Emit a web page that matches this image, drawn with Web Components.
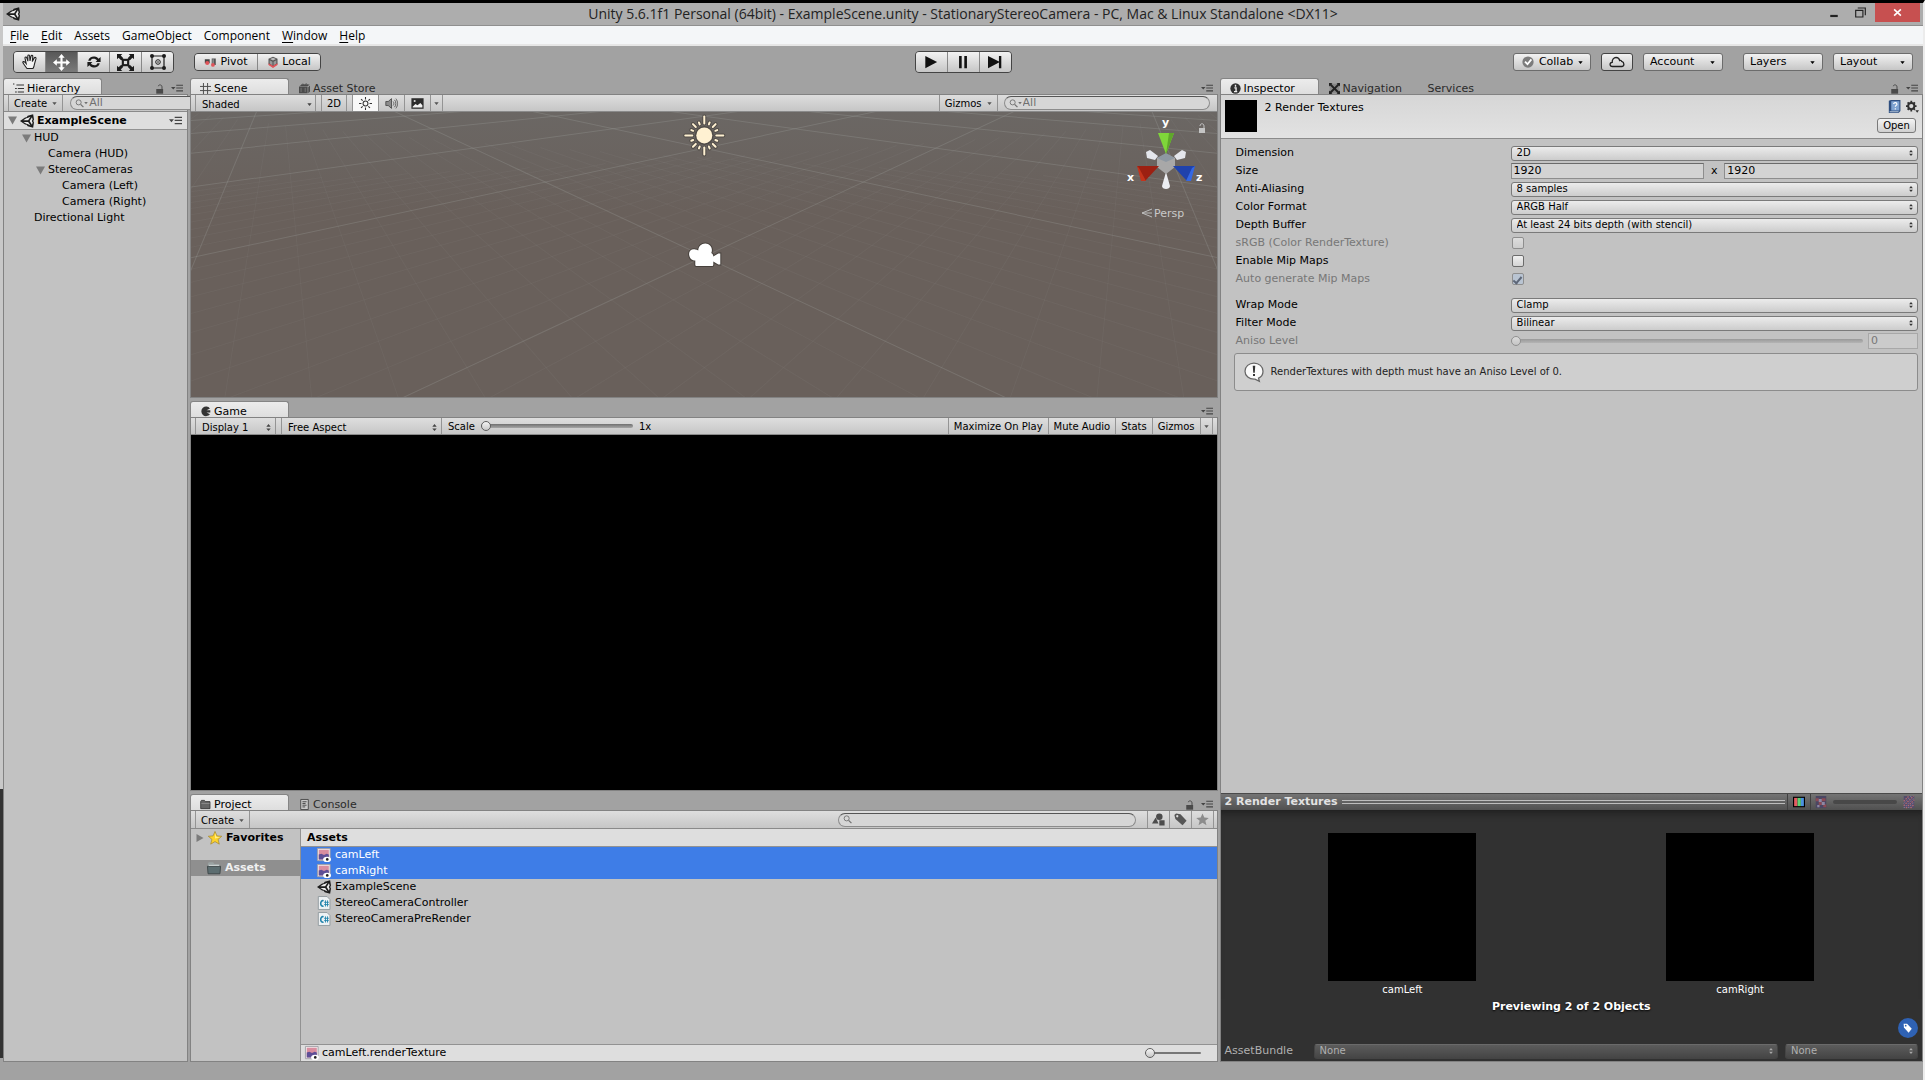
<!DOCTYPE html>
<html lang="en">
<head>
<meta charset="utf-8">
<title>Unity 5.6.1f1 Personal (64bit) - ExampleScene.unity</title>
<style>
    html, body {
        margin: 0;
        height: 100%;
    }

    body {
        box-sizing: border-box;
        display: flex;
        border-top: 3px solid #000;
        border-right: 2px solid #ececec;
        background-color: #a2a2a2;
        color: #000;
        font: 11px/16px "DejaVu Sans", sans-serif;
        overflow: hidden;
    }
</style>
</head>
<body>
<editor-window></editor-window>

<script>
const ICONS = {
    unity: `<path d="M15 .2 8.800 2 7.600 3.800 5.800 3.900 0 8l5.800 4.100 1.800.1L8.800 14 15 15.800 16 9.600 15.200 8 16 6.400z" fill="#1c1c1c"/><path d="M3.800 7 7.200 4.800 8.600 4.700 12 3 9.300 7zM3.800 9l3.400 2.200 1.400.1L12 13 9.300 9zM11 8l2.700-4.300.7 2.600-.9 1.700.9 1.700-.7 2.600z" fill="#ececec"/>`,
    hand: `<path d="M5 14.500 C3.500 12.500 1.500 10 .8 8.600 .6 7.500 2 7.200 2.900 8.200L4.200 9.600 3 4.200C2.800 2.900 4.400 2.600 4.800 3.800L5.900 7.200 5.800 2C5.900.7 7.400.7 7.600 2L8 7 9 2.200C9.300 1 10.900 1.200 10.800 2.500L10.300 7.500 12.300 3.900C13 2.900 14.300 3.500 14 4.700L12.600 9.500C12.300 11.500 12 13 11 14.500z" fill="#f2f2f2" stroke="#222" stroke-width="1.100"/>`,
    move: `<path d="M8 0l3 3.600H9V7h3.400V5L16 8l-3.600 3V9H9v3.400h2L8 16l-3-3.600h2V9H3.600v2L0 8l3.600-3v2H7V3.600H5z" fill="#fff"/>`,
    rotate: `<path d="M2.200 6.800C3 3.500 6 2.300 8.500 2.600c2 .2 3.300 1.200 4.100 2.200L14.600 3v5H9.600l1.500-1.600C9.500 4.200 5 4.200 4.700 6.800zM13.800 9.200c-.8 3.300-3.800 4.500-6.300 4.200-2-.2-3.300-1.200-4.100-2.200L1.400 13V8h5L4.900 9.600c1.600 2.200 6.100 2.200 6.400-.4z" fill="#1c1c1c"/>`,
    scale: `<path d="M0 0h5L3.500 1.500 6 4 4 6 1.500 3.500 0 5zM16 0h-5l1.500 1.500L10 4l2 2 2.500-2.500L16 5zM0 16h5l-1.500-1.500L6 12l-2-2-2.500 2.500L0 11zM16 16h-5l1.500-1.500L10 12l2-2 2.500 2.500L16 11z" fill="#1c1c1c"/><rect x="5.500" y="5.500" width="5" height="5" fill="#ddd" stroke="#1c1c1c" stroke-width="2"/>`,
    rect: `<path d="M2 2h12v12H2z" fill="none" stroke="#1c1c1c" stroke-width="1.200"/><g fill="#1c1c1c"><circle cx="2" cy="2" r="2"/><circle cx="14" cy="2" r="2"/><circle cx="2" cy="14" r="2"/><circle cx="14" cy="14" r="2"/></g><circle cx="8" cy="8" r="2.300" fill="none" stroke="#1c1c1c"/><circle cx="8" cy="8" r=".8" fill="#1c1c1c"/>`,
    pivot: `<path d="M1 4h6v5H1z" fill="#444"/><circle cx="4" cy="8.500" r="2.500" fill="#e0545a"/><path d="M9.500 3h5v8h-5z" fill="#555"/><path d="M10.500 4h1.500v6h-1.500z" fill="#999"/><circle cx="11" cy="11" r="2.300" fill="#e0545a"/>`,
    local: `<path d="M8 1l6 2.600v7.400L8 15l-6-4V3.600z" fill="#555"/><path d="M8 2.300l4 1.700-4 2-4-2z" fill="#bbb"/><path d="M3.500 5.500 7.300 7.500v5L3.500 10zM12.500 5.500 8.700 7.500v5l3.800-2.500z" fill="#999"/><path d="M2 9.500 8 13l6-3.500V12l-6 4-6-4z" fill="#e0545a"/>`,
    play: `<path d="M1.500 1 15 8 1.500 15z" fill="#111"/>`,
    pause: `<path d="M3.500 1h3v14h-3zM9.500 1h3v14h-3z" fill="#111"/>`,
    step: `<path d="M0 1 12.500 7.500V1h2.700v14h-2.700V8.500L0 15z" fill="#111"/>`,
    check: `<circle cx="8" cy="8" r="7.500" fill="#7c7c7c"/><path d="M4 7.600 7.300 11 12.500 4.500" fill="none" stroke="#fff" stroke-width="2.400"/>`,
    cloud: `<path d="M3.500 12.500C.3 12.300.3 8.600 3.200 8.300 3 5.500 4.800 3.500 7 3.500c2 0 3.300 1.200 3.700 3 .9-.5 1.700.2 2 .9 2.900.9 2.900 4.700 0 5.100z" fill="none" stroke="#222" stroke-width="1.300"/>`,
    down: `<path d="M1 4h14L8 13z" fill="currentColor"/>`,
    updown: `<path d="M8 0l5 6H3zM8 16l5-6H3z" fill="currentColor"/>`,
    foldopen: `<path d="M0 1h16L8 15z" fill="#7b7b7b"/>`,
    foldclosed: `<path d="M1 0v16L15 8z" fill="#7b7b7b"/>`,
    hierarchy: `<path d="M0 1.500h2M5 3h11M3 8h2.500M7 8h9M3 13h2.500M7 13h9" stroke="#333" stroke-width="1.500"/>`,
    grid: `<path d="M5 0v16M11 0v16M0 5h16M0 11h16" stroke="#4c4c4c" stroke-width="1.400"/>`,
    store: `<path d="M0 5 12.500 5V15H0zM13.500 6 16 3.500V12.500L13.500 15zM1 4.200 4 2h11.500L13 4.200z" fill="#4b4b4b"/><path d="M4 4C4 .5 7 .5 7.500 4M8.500 4C8.500.5 12 .5 12 3" fill="none" stroke="#4b4b4b" stroke-width="1.300"/><path d="M3 7v6M9 7v6" stroke="#8b8b8b"/>`,
    game: `<path d="M14.500 3.500A7 7 0 1 0 14.500 12L9.500 9.600H15V6H9.500z" fill="#333"/>`,
    folder: `<path d="M1 14V3.500L2 2h4.500L8 3.800H14.500V14z" fill="#666" stroke="#333" stroke-width="1.200"/><path d="M2 6.500h12" stroke="#999"/>`,
    bigfolder: `<path d="M1 14V3L2 1.500h5L8.500 3.300H14V6H1z" fill="#9aa2a2"/><path d="M.5 6h15l-.7 8.600H1.200z" fill="#5c6d70" stroke="#3a4446"/><path d="M2 5h12" stroke="#dfe5e5"/>`,
    console: `<path d="M2.500.7h11v14.600h-11z" fill="#c9c9c9" stroke="#444" stroke-width="1.300"/><path d="M5 4h6M5 6.500h4.500M5 9h6M5 11.500h4" stroke="#333" stroke-width="1.200"/>`,
    info: `<circle cx="8" cy="8" r="7.500" fill="#303030"/><path d="M8 2.500v3M6.300 7h2.500v5M5.800 12.500h4.700" stroke="#f0f0f0" stroke-width="2" fill="none"/>`,
    nav: `<path d="M1 1h14v14H1z" fill="#888"/><path d="M0 0h5L3.500 1.500 8 6l4.500-4.500L11 0h5v5l-1.500-1.500L10 8l4.500 4.500L16 11v5h-5l1.500-1.500L8 10l-4.500 4.500L5 16H0v-5l1.500 1.500L6 8 1.500 3.500 0 5z" fill="#222"/>`,
    lock: `<path d="M2 8h11v7.500H2z" fill="currentColor"/><path d="M11.200 8V4.500C11.200.6 5.500.6 5.300 3.500" fill="none" stroke="currentColor" stroke-width="1.600"/>`,
    panemenu: `<path d="M0 6.500h6L3 10zM7 3.500h9V5H7zM7 7.200h9v1.500H7zM7 11h9v1.500H7z" fill="#444"/>`,
    search: `<circle cx="6.500" cy="6" r="4.500" fill="none" stroke="#707070" stroke-width="1.600"/><path d="M10 9.500l5 5" stroke="#707070" stroke-width="2.200"/>`,
    light: `<circle cx="8" cy="8" r="3" fill="none" stroke="#333" stroke-width="1.300"/><path d="M8 0v3M8 13v3M0 8h3M13 8h3M2.500 2.500l2 2M11.500 11.500l2 2M13.500 2.500l-2 2M4.500 11.500l-2 2" stroke="#333" stroke-width="1.300"/>`,
    audio: `<path d="M1 5.500h3L8 2v12l-4-3.500H1z" fill="#8c8c8c" stroke="#444"/><path d="M10 5.500c1.200 1.500 1.200 3.500 0 5M11.700 3.500c2.200 2.600 2.200 6.400 0 9M13.400 2c2.700 3.500 2.700 8.500 0 12" fill="none" stroke="#555" stroke-width="1.100"/>`,
    image: `<path d="M.5 1.500h15v13H.5z" fill="#2c2c2c"/><path d="M2 12 5.500 8.500 8 10 11.500 7.500 14 10v3H2z" fill="#f2f2f2"/><circle cx="4.500" cy="5" r="1.300" fill="#ddd"/>`,
    shapes: `<circle cx="9" cy="4.500" r="4" fill="#4c4c4c"/><path d="M0 13 4.500 5.500 8 13zM9 9h6.500v6.500H9z" fill="#4c4c4c"/>`,
    tag: `<path d="M.5 2.500 2.500.5 8 1.500 15.500 9.500 10.500 15 1.700 7.500z" fill="currentColor"/><circle cx="4" cy="4" r="1.400" fill="#ddd"/>`,
    bluetag: `<path d="M1 1h5.500L14 9l-5 6.500L1.500 7z" fill="#fff"/><circle cx="4.300" cy="4.300" r="1.400" fill="#2f62b4"/>`,
    star: `<path d="M8 .5l2.200 5.100 5.500.4-4.200 3.600 1.400 5.400L8 12.100 3.100 15l1.400-5.400L.3 6l5.500-.4z" fill="#8c8c8c"/>`,
    favorite: `<path d="M8 .5l2.200 5.100 5.500.4-4.200 3.600 1.400 5.400L8 12.100 3.100 15l1.400-5.400L.3 6l5.500-.4z" fill="#fcd22c" stroke="#a3852c" stroke-width=".8"/><path d="M8 2.500 9.500 6.500 14 7 8 8.500z" fill="#fff08c"/>`,
    texture: `<path d="M.5.500h14.500v14H.5z" fill="#f2ecec" stroke="#9c9ca4"/><path d="M2 2h11.500v11H2z" fill="#d98ea0"/><path d="M2 7.500 5 6.500 8 8l3-1.500 2.500.8V13H2z" fill="#5e4f96"/><ellipse cx="11.500" cy="13" rx="4.500" ry="2.900" fill="#fff"/><circle cx="11.700" cy="13" r="1.500" fill="#222"/>`,
    script: `<path d="M1.500.6h10L14.800 4v11.400H1.500z" fill="#eef2f4" stroke="#8d979c"/><path d="M7.500 5.500C3.500 4 2.800 12.500 7.500 11.700" fill="none" stroke="#1f83ab" stroke-width="1.800"/><path d="M9.700 5v7M12 5v7M8.200 7.200h5.300M8.200 9.800h5.300" stroke="#1f83ab" stroke-width="1"/>`,
    book: `<path d="M1 1 3.500 0h11.800v13.500L13 16H1z" fill="#2f4f80"/><path d="M4 1.500h10v11.500H4z" fill="#7fa3d1"/><path d="M7 5c0-2.500 4-2.300 4 .1 0 1.600-2 1.500-2 3.200M9 10v1.700" stroke="#fff" stroke-width="1.400" fill="none"/><path d="M2 14.500h11" stroke="#dde6f2"/>`,
    gear: `<circle cx="6.500" cy="7.500" r="3.800" fill="none" stroke="#303030" stroke-width="2.400"/><path d="M6.500 1v2.500M6.500 11.500V14M0 7.500h2.500M10.500 7.500H13M2 3l1.800 1.800M9.200 10.200 11 12M11 3 9.200 4.800M3.800 10.200 2 12" stroke="#303030" stroke-width="2.200"/><path d="M11.500 12.500H16l-2.200 3.200z" fill="#303030"/>`,
    help: `<path d="M8 .8C12 .8 15.200 3.700 15.200 7.300c0 3-1.800 4.800-3.600 5.600L12.300 15.500 8.800 13.700C4 14 .8 11 .8 7.300.8 3.700 4 .8 8 .8z" fill="#fafafa" stroke="#666"/><path d="M7 3h2l-.4 5.500H7.400zM7.200 9.500h1.600v1.700H7.200z" fill="#333"/>`,
    rgb: `<path d="M0 1h16v14H0z" fill="#000"/><path d="M1.500 2.500H6v11H1.500z" fill="#e35b62"/><path d="M6 2.500h4.500v11H6z" fill="#5fd072"/><path d="M10.500 2.500h4v11h-4z" fill="#4c91e0"/>`,
    mipsmall: `<path d="M1 0h14v16H1z" fill="#4b4763"/><path d="M1 3h4v4H1zM9 3h5v4H9zM5 8h4v4H5zM11 11h4v4h-4z" fill="#8c4a54"/><path d="M5 4h4v4H5zM9 8h4v4H9zM3 12h3v3H3z" fill="#8e88a4"/>`,
    miplarge: `<path d="M1 0h14v16H1z" fill="#544c6c"/><path d="M1 7 8 0M1 13 14 0M4 16 15 5M10 16l5-5" stroke="#b06a70" stroke-width="1.800" stroke-dasharray="2 1.500"/><path d="M1 10 11 0M1 16 15 2M7 16l8-8" stroke="#8e88a8" stroke-width="1.200" stroke-dasharray="2 2"/>`,
    minimize: `<path d="M2 11h12v3.500H2z" fill="#222"/>`,
    restore: `<path d="M1 5h10.500v9.500H1zM4 1.500h11V12" fill="none" stroke="#222" stroke-width="1.700"/>`,
    close: `<path d="M2 2.500l12 11M14 2.500l-12 11" stroke="#fff" stroke-width="2.800"/>`
};

// small helper, every element below uses it
function define(name, markup, init) {
    customElements.define(name, class extends HTMLElement {
        connectedCallback() {
            if (this.shadowRoot) {
                return;
            }
            const root = this.attachShadow({mode: "open"});
            root.innerHTML = typeof markup === "function" ? markup(this) : markup;
            if (init) {
                init(this, root);
            }
        }
    });
}

define("ui-icon", el => {
    const w = el.getAttribute("size") || 12;
    return `
    <style>
        :host { display: inline-flex; flex: none; }
        svg { display: block; overflow: visible; }
    </style>
    <svg width="${w}" height="${w}" viewBox="0 0 16 16" aria-hidden="true">${ICONS[el.getAttribute("name")]}</svg>`;
});

/* ---------- frame ---------- */

define("title-bar", `
    <style>
        :host {
            display: grid;
            grid-template-columns: 1fr auto 1fr;
            align-items: center;
            height: 22px;
            background-color: #adadad;
            border-bottom: 1px solid #8f8f8f;
            font: 14px/20px "Open Sans", "Noto Sans", sans-serif;
            color: #222;
        }
        .logo { padding-left: 3px; }
        .buttons { display: flex; justify-content: flex-end; align-self: start; padding-right: 3px; }
        button {
            display: flex;
            align-items: center;
            justify-content: center;
            width: 26px;
            height: 19px;
            padding: 0;
            border: 0;
            background: none;
        }
        .close { width: 45px; margin-left: 2px; background-color: #c75050; }
    </style>
    <ui-icon class="logo" name="unity" size="14"></ui-icon>
    <span><slot></slot></span>
    <div class="buttons">
        <button aria-label="Minimize"><ui-icon name="minimize" size="10"></ui-icon></button>
        <button aria-label="Restore"><ui-icon name="restore" size="11"></ui-icon></button>
        <button class="close" aria-label="Close"><ui-icon name="close" size="9"></ui-icon></button>
    </div>`);

define("menu-bar", `
    <style>
        :host {
            display: flex;
            gap: 12px;
            height: 18px;
            padding-left: 7px;
            background-color: #f4f6f8;
            border-bottom: 2px solid #e6e6e6;
            font: 12px/19px "Open Sans", "Noto Sans", sans-serif;
        }
        a { color: #000; text-decoration: none; }
        u { text-underline-offset: 2px; }
    </style>
    <a href="#"><u>F</u>ile</a>
    <a href="#"><u>E</u>dit</a>
    <a href="#">Assets</a>
    <a href="#">GameObject</a>
    <a href="#">Component</a>
    <a href="#"><u>W</u>indow</a>
    <a href="#"><u>H</u>elp</a>`);

define("main-toolbar", `
    <style>
        :host {
            display: grid;
            grid-template-columns: 1fr auto 1fr;
            align-items: center;
            height: 32px;
            padding: 0 10px;
            box-sizing: border-box;
        }
        div { display: flex; align-items: center; }
        .group {
            border: 1px solid #444;
            border-radius: 4px;
            background-color: #888;
            gap: 1px;
            overflow: hidden;
        }
        button {
            display: flex;
            align-items: center;
            justify-content: center;
            box-sizing: border-box;
            height: 20px;
            padding: 0;
            border: 0;
            background: linear-gradient(#f2f2f2, #c6c6c6);
            color: #000;
            font: inherit;
        }
        .tools { margin-right: 20px; }
        .tools button, .play button { width: 31px; }
        .tools .on { background: linear-gradient(#585858, #7a7a7a); }
        .pivot button { height: 16px; width: 62px; gap: 3px; }
        .right { justify-content: flex-end; gap: 10px; }
        .right button {
            height: 18px;
            padding: 0 7px 0 6px;
            border: 1px solid #6c6c6c;
            border-radius: 3px;
            justify-content: space-between;
            width: 80px;
        }
        .right .collab { width: 78px; padding: 0 7px 0 8px; }
        .right .cloud { width: 32px; justify-content: center; padding: 0; border-color: #444; }
        .layers { margin-left: 10px; }
    </style>
    <div>
        <div class="group tools">
            <button aria-label="Hand"><ui-icon name="hand" size="16"></ui-icon></button>
            <button class="on" aria-label="Move"><ui-icon name="move" size="17"></ui-icon></button>
            <button aria-label="Rotate"><ui-icon name="rotate" size="16"></ui-icon></button>
            <button aria-label="Scale"><ui-icon name="scale" size="17"></ui-icon></button>
            <button aria-label="Rect"><ui-icon name="rect" size="16"></ui-icon></button>
        </div>
        <div class="group pivot">
            <button><ui-icon name="pivot" size="13"></ui-icon>Pivot</button>
            <button><ui-icon name="local" size="12"></ui-icon>Local</button>
        </div>
    </div>
    <div class="group play">
        <button aria-label="Play"><ui-icon name="play" size="14"></ui-icon></button>
        <button aria-label="Pause"><ui-icon name="pause" size="14"></ui-icon></button>
        <button aria-label="Step"><ui-icon name="step" size="14"></ui-icon></button>
    </div>
    <div class="right">
        <button class="collab"><ui-icon name="check" size="12"></ui-icon>Collab<ui-icon name="down" size="5"></ui-icon></button>
        <button class="cloud" aria-label="Services"><ui-icon name="cloud" size="16"></ui-icon></button>
        <button>Account<ui-icon name="down" size="5"></ui-icon></button>
        <button class="layers">Layers<ui-icon name="down" size="5"></ui-icon></button>
        <button>Layout<ui-icon name="down" size="5"></ui-icon></button>
    </div>`);

/* ---------- docking ---------- */

define("dock-tab", el => `
    <style>
        :host { display: flex; }
        button {
            display: flex;
            align-items: center;
            gap: 3px;
            box-sizing: border-box;
            min-width: 99px;
            height: 16px;
            padding: 3px 9px 0 9px;
            border: 1px solid transparent;
            border-bottom: 0;
            border-radius: 3px 3px 0 0;
            background: none;
            color: #2a2a2a;
            font: inherit;
            line-height: 13px;
        }
        :host([active]) button {
            background: linear-gradient(#ececec, #dedede);
            border-color: #858585;
            color: #000;
        }
    </style>
    <button>${el.hasAttribute("icon") ? `<ui-icon name="${el.getAttribute("icon")}" size="11"></ui-icon>` : ""}<slot></slot></button>`);

define("dock-panel", el => `
    <style>
        :host {
            display: flex;
            flex-direction: column;
            min-width: 0;
            min-height: 0;
        }
        .tabs {
            display: flex;
            height: 16px;
            border-bottom: 1px solid #828282;
        }
        .actions {
            display: flex;
            align-items: flex-end;
            gap: 6px;
            margin-left: auto;
            padding-right: 5px;
            color: #4a4a4a;
        }
        .body {
            flex: 1;
            display: flex;
            flex-direction: column;
            min-height: 0;
            border: 1px solid #828282;
            border-top: 0;
            background-color: #c2c2c2;
        }
    </style>
    <div class="tabs">
        <slot name="tab"></slot>
        <div class="actions">
            ${el.hasAttribute("lockable") ? `<ui-icon name="lock" size="10"></ui-icon>` : ""}
            <ui-icon name="panemenu" size="12"></ui-icon>
        </div>
    </div>
    <div class="body"><slot></slot></div>`);

define("tool-strip", `
    <style>
        :host {
            display: flex;
            height: 16px;
            padding: 0 4px;
            border-bottom: 1px solid #8a8a8a;
            background: linear-gradient(#dedede, #c6c6c6);
            font-size: 10px;
            line-height: 17px;
        }
    </style>
    <slot></slot>`);

define("strip-button", el => `
    <style>
        :host { display: flex; margin-right: -1px; }
        button {
            display: flex;
            align-items: center;
            justify-content: center;
            gap: 5px;
            padding: 1px 5px 0;
            border: 1px solid #949494;
            border-width: 0 1px;
            background: none;
            color: #000;
            font: inherit;
        }
        :host([icon]) button { padding: 0 6px; }
        :host([narrow]) button { padding: 0 4px; }
        :host([mini]) button { padding: 0 3px; }
        :host([on]) button { background-color: #f8f8f8; }
        :host([plain]) button { border-color: transparent; }
        ui-icon { color: #555; }
    </style>
    <button aria-label="${el.getAttribute("label") || el.textContent}">
        ${el.hasAttribute("icon") ? `<ui-icon name="${el.getAttribute("icon")}" size="13"></ui-icon>` : ""}
        <slot></slot>
        ${el.hasAttribute("menu") ? `<ui-icon name="down" size="5"></ui-icon>` : ""}
    </button>`);

// single arrow button at the end of a strip group
define("strip-arrow", el => `
    <style>
        :host { display: flex; }
        button {
            display: flex;
            align-items: center;
            padding: 0 3px;
            border: 1px solid #949494;
            border-width: 0 1px;
            background: none;
            color: #555;
        }
    </style>
    <button aria-label="${el.getAttribute("label")}"><ui-icon name="down" size="5"></ui-icon></button>`);

// flat drop-down that sits in a tool strip
define("strip-select", el => `
    <style>
        :host { display: grid; border: 1px solid #949494; border-width: 0 1px; }
        select, ui-icon { grid-area: 1 / 1; }
        select {
            appearance: none;
            padding: 1px 16px 0 6px;
            border: 0;
            border-radius: 0;
            background: none;
            color: #000;
            font: inherit;
            outline: 0;
        }
        ui-icon { place-self: center end; padding-right: 3px; color: #444; pointer-events: none; }
    </style>
    <select aria-label="${el.getAttribute("label")}"><option>${el.getAttribute("value")}</option></select>
    <ui-icon name="${el.getAttribute("arrow") || "updown"}" size="${el.hasAttribute("arrow") ? 5 : 7}"></ui-icon>`);

define("search-field", el => `
    <style>
        :host { display: flex; align-self: center; }
        label {
            flex: 1;
            display: flex;
            align-items: center;
            height: 12px;
            padding: 0 6px 0 4px;
            border: 1px solid #8c8c8c;
            border-top-color: #555;
            border-radius: 7px;
            background-color: #d6d6d6;
            color: #707070;
        }
        input {
            flex: 1;
            min-width: 0;
            padding: 0 1px;
            border: 0;
            background: none;
            color: inherit;
            font: inherit;
            line-height: 12px;
            outline: 0;
        }
        input::placeholder { color: #707070; }
    </style>
    <label>
        <ui-icon name="search" size="9"></ui-icon>
        ${el.hasAttribute("menu") ? `<ui-icon name="down" size="4"></ui-icon>` : ""}
        <input type="text" aria-label="Search" placeholder="${el.getAttribute("placeholder") || ""}">
    </label>`);

define("range-slider", el => `
    <style>
        :host { display: flex; align-items: center; }
        input {
            appearance: none;
            width: 100%;
            height: 10px;
            margin: 0;
            background: none;
        }
        input::-webkit-slider-runnable-track {
            height: 4px;
            border-radius: 2px;
            background: linear-gradient(#707070, #a6a6a6);
        }
        input::-webkit-slider-thumb {
            appearance: none;
            box-sizing: border-box;
            width: 10px;
            height: 10px;
            margin-top: -3px;
            border: 1px solid #606060;
            border-radius: 5px;
            background: linear-gradient(#f4f4f4, #c8c8c8);
        }
        :host([thin]) input::-webkit-slider-runnable-track { height: 2px; background: #777; }
        :host([thin]) input::-webkit-slider-thumb { margin-top: -4px; }
        :host([disabled]) { opacity: .5; }
        :host([dark]) input::-webkit-slider-runnable-track { background: #484848; }
        :host([dark]) input::-webkit-slider-thumb { visibility: hidden; }
    </style>
    <input type="range" min="0" max="16" value="0" aria-label="${el.getAttribute("label")}"${el.hasAttribute("disabled") ? " disabled" : ""}>`);

/* ---------- hierarchy ---------- */

define("tree-row", el => `
    <style>
        :host {
            display: flex;
            align-items: center;
            gap: 3px;
            height: 16px;
            padding-left: calc(4px + 14px * var(--depth, 0));
        }
        :host([scene]) {
            height: 17px;
            padding-right: 5px;
            border-bottom: 1px solid #929292;
            background-color: #dedede;
            font-weight: bold;
        }
        .fold { width: 9px; display: flex; }
        .menu { margin-left: auto; }
    </style>
    <span class="fold">${el.hasAttribute("open") ? `<ui-icon name="foldopen" size="9"></ui-icon>` : ""}</span>
    ${el.hasAttribute("scene") ? `<ui-icon name="unity" size="14"></ui-icon>` : ""}
    <slot></slot>
    ${el.hasAttribute("scene") ? `<ui-icon class="menu" name="panemenu" size="13"></ui-icon>` : ""}`,
    el => el.style.setProperty("--depth", el.getAttribute("depth") || 0));

define("hierarchy-panel", `
    <style>
        :host { display: flex; }
        dock-panel { flex: 1; }
        search-field { flex: 1; margin: 0 8px; font-size: 11px; }
    </style>
    <dock-panel lockable>
        <dock-tab slot="tab" icon="hierarchy" active>Hierarchy</dock-tab>
        <tool-strip>
            <strip-button menu>Create</strip-button>
            <search-field menu placeholder="All"></search-field>
        </tool-strip>
        <tree-row scene open>ExampleScene</tree-row>
        <tree-row depth="1" open>HUD</tree-row>
        <tree-row depth="2">Camera (HUD)</tree-row>
        <tree-row depth="2" open>StereoCameras</tree-row>
        <tree-row depth="3">Camera (Left)</tree-row>
        <tree-row depth="3">Camera (Right)</tree-row>
        <tree-row depth="1">Directional Light</tree-row>
    </dock-panel>`);

/* ---------- scene and game ---------- */

// ground grid seen in perspective: both line families run to the horizon
function gridLines() {
    const cx = 513, horizon = -54, spread = 425;
    let lines = "";
    for (let m = -28; m <= 60; m++) {
        const k = 0.005025 + 0.0006 * m;
        const major = m % 10 === 0;
        const top = major ? 0 : Math.max(0, 30 + m * 2);
        if (top > 130) {
            continue;
        }
        for (const side of [-1, 1]) {
            const x1 = cx + side * spread * (1 - k * (top - horizon));
            const x2 = cx + side * spread * (1 - k * (300 - horizon));
            lines += `<path d="M${x1.toFixed(1)} ${top}L${x2.toFixed(1)} 300" stroke-opacity="${major ? .25 : .08}"/>`;
        }
    }
    return lines;
}

define("scene-view", () => {
    let rays = "";
    for (let i = 0; i < 16; i++) {
        const len = i % 4 === 0 ? 19 : i % 2 === 0 ? 16 : 14;
        rays += `<path d="M0 -12V${-len}" transform="rotate(${i * 22.5})"/>`;
    }
    return `
    <style>
        :host {
            flex: 1;
            display: grid;
            min-height: 0;
            overflow: hidden;
            background: linear-gradient(#6b6764, #69605b 35%);
        }
        svg { grid-area: 1 / 1; width: 100%; height: 100%; min-height: 0; display: block; }
        .gizmo {
            grid-area: 1 / 1;
            justify-self: end;
            width: 110px;
            height: 120px;
        }
        text { font: bold 11px "DejaVu Sans", sans-serif; fill: #fff; }
        .persp { font-weight: normal; fill: #c9c9c9; }
    </style>
    <svg viewBox="0 0 1025 286" preserveAspectRatio="xMidYMid slice">
        <g stroke="#a6aaa6" fill="none">${gridLines()}</g>
        <g transform="translate(513 24)">
            <g stroke="#3f3a35" stroke-width="4" stroke-linecap="round" opacity=".6">${rays}</g>
            <g stroke="#fff1d2" stroke-width="2" stroke-linecap="round">${rays}</g>
            <circle r="9.500" fill="#3f3a35" opacity=".6"/>
            <circle r="8" fill="#fff1d2"/>
        </g>
        <g transform="translate(497 131)" fill="#fff" stroke="#47413c" stroke-width="2" paint-order="stroke">
            <path d="M7 7C3 6 0 9 1 13c.5 3 3 5 6 5v4c0 1 .5 1.500 1.500 1.500h15c1 0 1.500-.5 1.500-1.500v-3l5 3h2V11h-2l-5 3c0-2-1-3-2-3.500C25 6 22 1 17 1c-4 0-7 3-7 7-1-.8-2-1-3-1z"/>
        </g>
    </svg>
    <svg class="gizmo" viewBox="-4 0 110 120">
        <path d="M35 40 39 38 47 44 44 48 36 46zM75 40 71 38 63 44 66 48 74 46z" fill="#e4e6ec"/>
        <path d="M55 60l4 14c0 4-8 4-8 0z" fill="#eceef2"/>
        <path d="M55 42 64 46V55L55 62 46 55V46z" fill="#a8a8a8"/>
        <path d="M55 41 64 46 55 50 46 46z" fill="#8e98a2"/>
        <path d="M47 21H63L55 42z" fill="#7fd63a"/><path d="M58 21H63L55 42z" fill="#5fa82a"/>
        <path d="M26 54 48 54 34 69z" fill="#9c2012"/><path d="M26 54 30 69 35 69 28 56z" fill="#c4341c"/>
        <path d="M84 54 62 54 76 69z" fill="#1f42ac"/><path d="M84 54 80 69 75 69 81 56z" fill="#3468e4"/>
        <text x="51" y="14">y</text>
        <text x="16" y="69">x</text>
        <text x="85" y="69">z</text>
        <path d="M88 16h6v5h-6z" fill="#c4c4c4"/>
        <path d="M89 14c0-3 4-3 4 0v3" fill="none" stroke="#c4c4c4"/>
        <path d="M41 97 31 101 41 105M31 101H41" fill="none" stroke="#bdbdbd"/>
        <text class="persp" x="43" y="105">Persp</text>
    </svg>`;
});

define("scene-panel", `
    <style>
        :host { display: flex; min-height: 0; }
        dock-panel { flex: 1; }
        .shaded { width: 119px; margin-right: 5px; }
        .gizmos { margin-left: auto; }
        .light { margin-left: 6px; }
        search-field { width: 206px; margin: 0 3px 0 7px; font-size: 11px; }
    </style>
    <dock-panel>
        <dock-tab slot="tab" icon="grid" active>Scene</dock-tab>
        <dock-tab slot="tab" icon="store">Asset Store</dock-tab>
        <tool-strip>
            <strip-select class="shaded" label="Draw mode" value="Shaded" arrow="down"></strip-select>
            <strip-button>2D</strip-button>
            <strip-button class="light" icon="light" label="Lighting" on></strip-button>
            <strip-button icon="audio" label="Audio" plain></strip-button>
            <strip-button icon="image" label="Effects"></strip-button>
            <strip-arrow label="Effects menu"></strip-arrow>
            <strip-button class="gizmos" menu>Gizmos</strip-button>
            <search-field menu placeholder="All"></search-field>
        </tool-strip>
        <scene-view></scene-view>
    </dock-panel>`);

define("game-panel", `
    <style>
        :host { display: flex; min-height: 0; }
        dock-panel { flex: 1; }
        .display { width: 79px; margin-right: 5px; }
        .aspect { width: 159px; margin-right: 6px; }
        .scale { display: flex; gap: 6px; }
        range-slider { width: 152px; }
        .max { margin-left: auto; }
        .view { flex: 1; background-color: #000; }
    </style>
    <dock-panel>
        <dock-tab slot="tab" icon="game" active>Game</dock-tab>
        <tool-strip>
            <strip-select class="display" label="Display" value="Display 1"></strip-select>
            <strip-select class="aspect" label="Aspect" value="Free Aspect"></strip-select>
            <span class="scale">Scale <range-slider label="Scale"></range-slider> 1x</span>
            <strip-button class="max">Maximize On Play</strip-button>
            <strip-button>Mute Audio</strip-button>
            <strip-button>Stats</strip-button>
            <strip-button>Gizmos</strip-button>
            <strip-arrow label="Gizmos menu"></strip-arrow>
        </tool-strip>
        <div class="view"></div>
    </dock-panel>`);

/* ---------- project ---------- */

define("asset-row", el => `
    <style>
        :host {
            display: flex;
            align-items: center;
            gap: 4px;
            height: 16px;
            padding-left: 16px;
            line-height: 18px;
        }
        :host([selected]) { background-color: #3e7de7; color: #fff; }
    </style>
    <ui-icon name="${el.getAttribute("icon")}" size="14"></ui-icon>
    <slot></slot>`);

define("project-panel", `
    <style>
        :host { display: flex; min-height: 0; }
        dock-panel { flex: 1; }
        tool-strip { height: 17px; }
        search-field { width: 298px; margin: 0 11px 0 auto; }
        .split { flex: 1; display: grid; grid-template-columns: 110px 1fr; min-height: 0; }
        .folders { border-right: 1px solid #929292; font-weight: bold; }
        .folders div { display: flex; align-items: center; gap: 4px; height: 16px; }
        .fav { padding: 1px 0 14px 5px; }
        .cur { padding-left: 16px; background-color: #8f8f8f; color: #f0f0f0; }
        .list { display: flex; flex-direction: column; min-width: 0; }
        .path { height: 17px; padding-left: 6px; border-bottom: 1px solid #929292; background-color: #dedede; font-weight: bold; line-height: 18px; }
        .foot {
            display: flex;
            align-items: center;
            gap: 3px;
            height: 16px;
            margin-top: auto;
            padding: 0 16px 0 4px;
            border-top: 1px solid #929292;
            background-color: #dedede;
            line-height: 18px;
        }
        .foot range-slider { width: 56px; margin-left: auto; }
    </style>
    <dock-panel lockable>
        <dock-tab slot="tab" icon="folder" active>Project</dock-tab>
        <dock-tab slot="tab" icon="console">Console</dock-tab>
        <tool-strip>
            <strip-button menu>Create</strip-button>
            <search-field></search-field>
            <strip-button icon="shapes" label="Search by type" narrow></strip-button>
            <strip-button icon="tag" label="Search by label" narrow></strip-button>
            <strip-button icon="star" label="Save search" narrow></strip-button>
        </tool-strip>
        <div class="split">
            <div class="folders">
                <div class="fav"><ui-icon name="foldclosed" size="8"></ui-icon><ui-icon name="favorite" size="14"></ui-icon>Favorites</div>
                <div class="cur"><ui-icon name="bigfolder" size="14"></ui-icon>Assets</div>
            </div>
            <div class="list">
                <div class="path">Assets</div>
                <asset-row icon="texture" selected>camLeft</asset-row>
                <asset-row icon="texture" selected>camRight</asset-row>
                <asset-row icon="unity">ExampleScene</asset-row>
                <asset-row icon="script">StereoCameraController</asset-row>
                <asset-row icon="script">StereoCameraPreRender</asset-row>
                <div class="foot">
                    <ui-icon name="texture" size="14"></ui-icon>camLeft.renderTexture
                    <range-slider thin label="Icon size"></range-slider>
                </div>
            </div>
        </div>
    </dock-panel>`);

/* ---------- inspector ---------- */

const POPUP_STYLE = `
    .popup { display: grid; flex: 1; min-width: 0; font-size: 10px; }
    .popup select, .popup ui-icon { grid-area: 1 / 1; }
    .popup select {
        appearance: none;
        box-sizing: border-box;
        width: 100%;
        height: 15px;
        padding: 0 14px 0 5px;
        border: 1px solid #7a7a7a;
        border-radius: 3px;
        background: linear-gradient(#ececec, #cccccc);
        color: #000;
        font: inherit;
        line-height: 12px;
        outline: 0;
    }
    .popup ui-icon { place-self: center end; padding-right: 4px; color: #333; pointer-events: none; }`;

// control="popup | size | check | slider"
define("property-row", el => {
    const type = el.getAttribute("control");
    const off = el.hasAttribute("disabled") ? "disabled" : "";
    const value = el.getAttribute("value");
    let control = "";
    if (type === "popup") {
        control = `<span class="popup"><select id="c"><option>${value}</option></select><ui-icon name="updown" size="6"></ui-icon></span>`;
    } else if (type === "size") {
        control = `<input id="c" type="text" value="${value}"><span class="times">x</span><input type="text" aria-label="Height" value="${value}">`;
    } else if (type === "check") {
        control = `<input id="c" type="checkbox" ${el.hasAttribute("checked") ? "checked" : ""} ${off}>`;
    } else {
        control = `<range-slider ${off} label="Level"></range-slider><input id="c" class="num" type="text" value="${value}" ${off}>`;
    }
    return `
    <style>
        :host {
            display: grid;
            grid-template-columns: 275px 1fr;
            align-items: center;
            height: 18px;
            padding: 0 4px 0 15px;
        }
        :host([disabled]) label { color: #777; }
        label { line-height: 18px; }
        .control { display: flex; align-items: center; min-width: 0; }
        ${POPUP_STYLE}
        input[type=text] {
            flex: 1;
            box-sizing: border-box;
            min-width: 0;
            height: 16px;
            padding: 0 2px;
            border: 1px solid #8d8d8d;
            border-top-color: #6a6a6a;
            background-color: #d3d3d3;
            color: #000;
            font: inherit;
            outline: 0;
        }
        input.num { flex: none; width: 50px; }
        input[type=text]:disabled { border-color: #a8a8a8; background-color: #cbcbcb; color: #777; }
        .times { width: 20px; text-align: center; }
        range-slider { flex: 1; margin-right: 5px; }
        input[type=checkbox] {
            appearance: none;
            display: grid;
            place-items: center;
            box-sizing: border-box;
            width: 12px;
            height: 12px;
            margin: 0 1px;
            border: 1px solid #6c6c6c;
            border-radius: 2px;
            background: linear-gradient(#f0f0f0, #d4d4d4);
        }
        input[type=checkbox]:disabled { opacity: .6; }
        input[type=checkbox]:checked { background: #b4c6de; }
        input[type=checkbox]:checked::before {
            content: "";
            width: 3px;
            height: 7px;
            border: solid #1c2c48;
            border-width: 0 2px 2px 0;
            transform: rotate(40deg);
        }
    </style>
    <label for="c"><slot></slot></label>
    <span class="control">${control}</span>`;
});

define("help-box", `
    <style>
        :host {
            display: flex;
            align-items: center;
            gap: 7px;
            box-sizing: border-box;
            min-height: 38px;
            margin: 3px 4px 0 13px;
            padding: 0 9px;
            border: 1px solid #8c8c8c;
            border-radius: 3px;
            background-color: #cfcfcf;
            color: #222;
            font-size: 10px;
        }
    </style>
    <ui-icon name="help" size="20"></ui-icon>
    <slot></slot>`);

define("inspector-header", `
    <style>
        :host {
            display: flex;
            gap: 8px;
            height: 43px;
            padding: 0 3px 0 4px;
            border-bottom: 1px solid #8a8a8a;
            background: linear-gradient(#d6d6d6, #e2e2e2);
        }
        .thumb { width: 32px; height: 32px; margin-top: 5px; background-color: #000; }
        .name { flex: 1; padding-top: 5px; }
        .side { display: flex; flex-direction: column; align-items: flex-end; gap: 5px; padding-top: 5px; }
        .icons { display: flex; gap: 5px; }
        button {
            width: 39px;
            height: 15px;
            margin-right: 3px;
            padding: 0;
            border: 1px solid #7a7a7a;
            border-radius: 3px;
            background: linear-gradient(#f4f4f4, #d0d0d0);
            font: inherit;
            font-size: 10px;
            line-height: 13px;
        }
    </style>
    <div class="thumb"></div>
    <div class="name"><slot></slot></div>
    <div class="side">
        <div class="icons"><ui-icon name="book" size="13"></ui-icon><ui-icon name="gear" size="13"></ui-icon></div>
        <button>Open</button>
    </div>`);

define("preview-pane", `
    <style>
        :host { display: block; background-color: #313131; color: #fff; border-top: 1px solid #4a4a4a; }
        header {
            display: flex;
            align-items: center;
            height: 16px;
            padding: 0 7px 0 4px;
            background: linear-gradient(#747474, #505050);
            color: #e2e2e2;
            font-weight: bold;
        }
        .grip { flex: 1; height: 2px; margin: 0 2px 0 4px; border: 1px solid #bcbcbc; border-width: 1px 0; }
        header button {
            display: flex;
            align-items: center;
            height: 16px;
            margin-right: 4px;
            padding: 0 5px;
            border: 1px solid #404040;
            border-width: 0 1px;
            background: none;
        }
        header range-slider { width: 64px; margin: 0 6px; }
        .figures {
            display: grid;
            grid-template-columns: 1fr 1fr;
            padding: 23px 13px 0;
            box-shadow: inset 0 8px 8px -6px #1c1c1c;
        }
        figure { display: flex; flex-direction: column; align-items: center; margin: 0; }
        .image { width: 148px; height: 148px; background-color: #000; }
        figcaption { font-size: 10px; line-height: 18px; }
        .summary { margin: 0; text-align: center; font-weight: bold; text-shadow: 0 1px 2px #000; }
        .labels { display: flex; justify-content: flex-end; padding: 3px 4px 5px; }
        .labels button {
            display: flex;
            align-items: center;
            justify-content: center;
            width: 20px;
            height: 20px;
            padding: 0;
            border: 0;
            border-radius: 10px;
            background-color: #2f62b4;
        }
        .bundle { display: flex; align-items: center; gap: 7px; height: 16px; padding: 0 4px 2px 4px; color: #b0b0b0; }
        .bundle label { width: 82px; }
        ${POPUP_STYLE}
        .popup select { border-color: #6a6a6a #444 #444; background: linear-gradient(#5c5c5c, #454545); color: #b0b0b0; }
        .popup ui-icon { color: #a8a8a8; }
        .popup.variant { flex: none; width: 133px; }
    </style>
    <header>
        2 Render Textures
        <span class="grip"></span>
        <button aria-label="RGB"><ui-icon name="rgb" size="12"></ui-icon></button>
        <ui-icon name="mipsmall" size="12"></ui-icon>
        <range-slider dark label="Mip level"></range-slider>
        <ui-icon name="miplarge" size="12"></ui-icon>
    </header>
    <div class="figures">
        <figure><div class="image"></div><figcaption>camLeft</figcaption></figure>
        <figure><div class="image"></div><figcaption>camRight</figcaption></figure>
    </div>
    <p class="summary">Previewing 2 of 2 Objects</p>
    <div class="labels"><button aria-label="Asset labels"><ui-icon name="bluetag" size="10"></ui-icon></button></div>
    <div class="bundle">
        <label for="bundle">AssetBundle</label>
        <span class="popup"><select id="bundle"><option>None</option></select><ui-icon name="updown" size="6"></ui-icon></span>
        <span class="popup variant"><select aria-label="Variant"><option>None</option></select><ui-icon name="updown" size="6"></ui-icon></span>
    </div>`);

define("inspector-panel", `
    <style>
        :host { display: flex; min-height: 0; }
        dock-panel { flex: 1; }
        .fields { flex: 1; padding-top: 5px; min-height: 0; }
        .gap { margin-top: 8px; }
    </style>
    <dock-panel lockable>
        <dock-tab slot="tab" icon="info" active>Inspector</dock-tab>
        <dock-tab slot="tab" icon="nav">Navigation</dock-tab>
        <dock-tab slot="tab">Services</dock-tab>
        <inspector-header>2 Render Textures</inspector-header>
        <div class="fields">
            <property-row control="popup" value="2D">Dimension</property-row>
            <property-row control="size" value="1920">Size</property-row>
            <property-row control="popup" value="8 samples">Anti-Aliasing</property-row>
            <property-row control="popup" value="ARGB Half">Color Format</property-row>
            <property-row control="popup" value="At least 24 bits depth (with stencil)">Depth Buffer</property-row>
            <property-row control="check" disabled>sRGB (Color RenderTexture)</property-row>
            <property-row control="check">Enable Mip Maps</property-row>
            <property-row control="check" checked disabled>Auto generate Mip Maps</property-row>
            <property-row class="gap" control="popup" value="Clamp">Wrap Mode</property-row>
            <property-row control="popup" value="Bilinear">Filter Mode</property-row>
            <property-row control="slider" value="0" disabled>Aniso Level</property-row>
            <help-box>RenderTextures with depth must have an Aniso Level of 0.</help-box>
        </div>
        <preview-pane></preview-pane>
    </dock-panel>`);

define("editor-window", `
    <style>
        :host { flex: 1; display: flex; min-width: 0; }
        .edge { flex: none; width: 3px; background: linear-gradient(#c8c8c8 73%, #333 73%, #333 98%, #a2a2a2 98%); }
        .app { flex: 1; display: flex; flex-direction: column; min-width: 0; }
        .docks {
            flex: 1;
            display: grid;
            grid-template-columns: 185px minmax(0, 1027fr) minmax(0, 703fr);
            column-gap: 2px;
            min-height: 0;
        }
        .center {
            display: grid;
            grid-template-rows: minmax(0, 320fr) minmax(0, 390fr) minmax(0, 268fr);
            row-gap: 3px;
            min-width: 0;
            min-height: 0;
        }
        .status { height: 18px; }
    </style>
    <div class="edge"></div>
    <div class="app">
        <title-bar>Unity 5.6.1f1 Personal (64bit) - ExampleScene.unity - StationaryStereoCamera - PC, Mac &amp; Linux Standalone &lt;DX11&gt;</title-bar>
        <menu-bar></menu-bar>
        <main-toolbar></main-toolbar>
        <div class="docks">
            <hierarchy-panel></hierarchy-panel>
            <div class="center">
                <scene-panel></scene-panel>
                <game-panel></game-panel>
                <project-panel></project-panel>
            </div>
            <inspector-panel></inspector-panel>
        </div>
        <div class="status"></div>
    </div>`);
</script>
</body>
</html>
